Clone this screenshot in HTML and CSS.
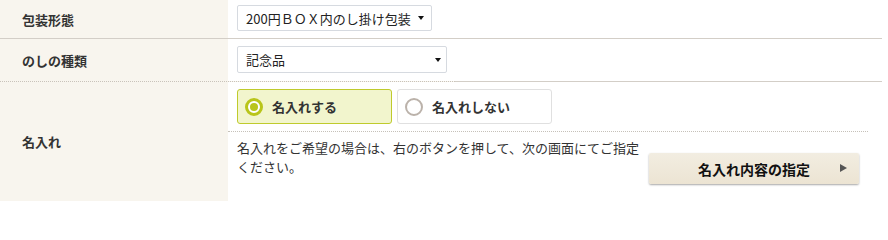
FILE: index.html
```html
<!DOCTYPE html>
<html lang="ja">
<head>
<meta charset="utf-8">
<link rel="stylesheet" href="styles.css">
</head>
<body>
<div class="form">
  <div class="row row1">
    <div class="th">包装形態</div>
    <div class="td">
      <div class="select s1"><span>200円ＢＯＸ内のし掛け包装</span><i class="arrow"></i></div>
    </div>
  </div>
  <div class="row row2">
    <div class="th">のしの種類</div>
    <div class="td">
      <div class="select s2"><span>記念品</span><i class="arrow"></i></div>
    </div>
  </div>
  <div class="sep"><span class="dots"></span><span class="solid"></span></div>
  <div class="row row3">
    <div class="th">名入れ</div>
    <div class="td td3">
      <div class="radios">
        <label class="radio on"><span class="ring"></span>名入れする</label>
        <label class="radio"><span class="ring"></span>名入れしない</label>
      </div>
      <div class="note">
        <p>名入れをご希望の場合は、右のボタンを押して、次の画面にてご指定ください。</p>
        <div class="btn">名入れ内容の指定<i class="tri"></i></div>
      </div>
    </div>
  </div>
</div>
</body>
</html>
```
FILE: styles.css
```css
* { box-sizing: border-box; }
html, body { margin: 0; padding: 0; background: #fff; }
body {
  font-family: "Noto Sans CJK JP", "Noto Sans", sans-serif;
  font-size: 13px;
  color: #333;
}
.form { width: 882px; }
.row { display: flex; }
.th {
  width: 228px;
  flex: none;
  background: #f8f5ee;
  padding-left: 22px;
  font-weight: bold;
  display: flex;
  align-items: center;
  color: #333;
}
.td { flex: 1; padding-left: 9px; }
.row1 { height: 39px; border-bottom: 1px solid #d3cec7; }
.row1 .td { padding-top: 5px; }
.row2 { height: 42px; }
.row2 .td { padding-top: 7px; }
.sep { display: flex; height: 1px; }
.sep .dots {
  width: 455px;
  border-top: 1px dotted #c9c3ba;
  background: #f8f5ee;
}
.sep .solid { flex: 1; background: #d3cec7; }
.row3 { height: 119px; }
.select {
  display: flex;
  align-items: center;
  justify-content: space-between;
  border: 1px solid #d6dae0;
  border-radius: 2px;
  background: #fff;
  color: #222;
  padding-left: 8px;
}
.s1 { width: 195px; height: 26px; padding-right: 7px; }
.s2 { width: 210px; height: 27px; padding-right: 5px; }
.arrow {
  width: 0; height: 0;
  border-left: 3px solid transparent;
  border-right: 3px solid transparent;
  border-top: 4px solid #111;
}
.td3 { padding-top: 7px; padding-right: 14px; }
.radios {
  display: flex;
  gap: 5px;
  padding-bottom: 7px;
  border-bottom: 1px dotted #c6c1b9;
  margin-left: -9px;
  padding-left: 9px;
}
.radio {
  width: 155px;
  height: 35px;
  display: flex;
  align-items: center;
  padding-left: 7px;
  border: 1px solid #e0e0e0;
  border-radius: 3px;
  background: #fff;
  font-weight: bold;
  color: #333;
}
.radio.on { background: #f2f5cd; border-color: #bfcb2c; }
.ring {
  width: 18px; height: 18px;
  border-radius: 50%;
  border: 2px solid #bbb2aa;
  background: #fff;
  margin-right: 9px;
  display: flex;
  align-items: center;
  justify-content: center;
}
.radio.on .ring { border: 3px solid #b9c51a; }
.radio.on .ring::after {
  content: "";
  width: 8px; height: 8px;
  border-radius: 50%;
  background: #b9c51a;
}
.note {
  display: flex;
  justify-content: space-between;
  align-items: flex-start;
}
.note p {
  margin: 6px 0 0;
  width: 406px;
  line-height: 19px;
  color: #333;
}
.btn {
  margin-top: 21px;
  margin-right: 9px;
  width: 210px;
  height: 31px;
  display: flex;
  align-items: center;
  justify-content: center;
  background: linear-gradient(#f2ede1, #ece4d3);
  border-radius: 2px;
  box-shadow: 0 1px 2px rgba(0,0,0,0.35);
  font-size: 14px;
  font-weight: bold;
  color: #111;
  position: relative;
}
.tri {
  position: absolute;
  right: 12px;
  top: 11px;
  width: 0; height: 0;
  border-top: 4.5px solid transparent;
  border-bottom: 4.5px solid transparent;
  border-left: 7px solid #555;
}
```
